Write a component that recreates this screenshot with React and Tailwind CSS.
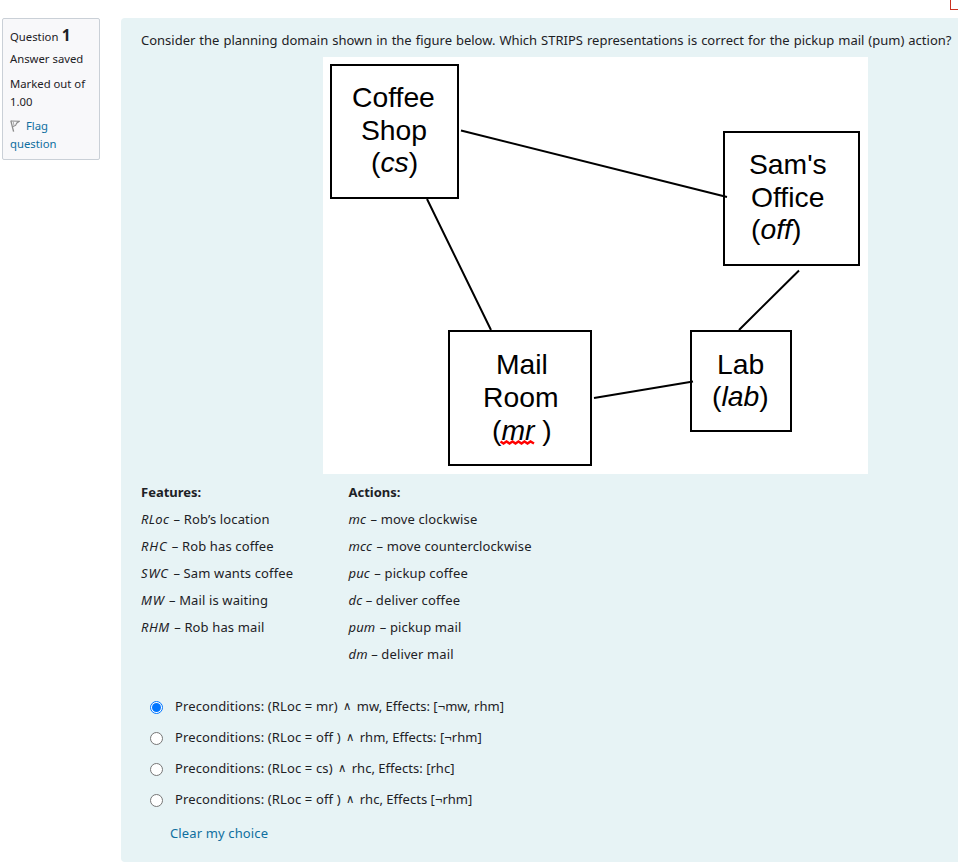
const features = [
  ['RLoc', 'Rob’s location', 'mr-[1px] tracking-[0.3px]'],
  ['RHC', 'Rob has coffee', 'mr-[1px] tracking-[0.8px]'],
  ['SWC', 'Sam wants coffee', 'mr-[1px] tracking-[0.9px]'],
  ['MW', 'Mail is waiting', 'mr-[1px] tracking-[0.7px]'],
  ['RHM', 'Rob has mail', 'mr-[1px] tracking-[0.5px]'],
];

const actions = [
  ['mc', 'move clockwise', 'mr-px'],
  ['mcc', 'move counterclockwise', 'mr-px'],
  ['puc', 'pickup coffee', 'mr-px'],
  ['dc', 'deliver coffee', ''],
  ['pum', 'pickup mail', 'mr-px'],
  ['dm', 'deliver mail', ''],
];

const options = [
  ['Preconditions: (RLoc = mr)', 'mw, Effects: [¬mw, rhm]'],
  ['Preconditions: (RLoc = off )', 'rhm, Effects: [¬rhm]'],
  ['Preconditions: (RLoc = cs)', 'rhc, Effects: [rhc]'],
  ['Preconditions: (RLoc = off )', 'rhc, Effects [¬rhm]'],
];

function TermList({ title, items }) {
  return (
    <div>
      <div className="font-bold">{title}</div>
      {items.map(([term, text, termClass]) => (
        <div key={term} className="tracking-[0.13px]">
          <i className={termClass}>{term}</i> – {text}
        </div>
      ))}
    </div>
  );
}

function FlagIcon() {
  return (
    <svg className="mr-[6px] inline-block align-[-2px]" width="10" height="12" viewBox="0 0 10 12" fill="none" stroke="#8a8a8a" strokeWidth="1.1">
      <path d="M0.8 0.6L3.6 11.6" strokeWidth="1.3" />
      <path d="M1 1L9.4 1.2L6.6 3.2L5.6 5.4L3 6.4" />
      <path d="M3.2 1.6L4 5.6" strokeWidth="0.7" />
    </svg>
  );
}

function Diagram() {
  return (
    <svg className="block bg-white" width="545" height="417" viewBox="0 0 545 417">
      <g fill="none" stroke="#000" strokeWidth="2">
        <rect x="8" y="8" width="127" height="133" />
        <rect x="401" y="75" width="135" height="133" />
        <rect x="126" y="274" width="142" height="134" />
        <rect x="368" y="274" width="100" height="100" />
        <path d="M138 73.5L404 140M104 142L168 273M271 341L370 324.5M416 273L476 213.5" />
      </g>
      <g fontSize="28.3" fill="#000" className="font-['Liberation_Sans',Arial,sans-serif]">
        <text x="29" y="50">Coffee</text>
        <text x="38" y="82.5">Shop</text>
        <text x="48" y="115">(<tspan fontStyle="italic">cs</tspan>)</text>
        <text x="426" y="116.5">Sam's</text>
        <text x="428" y="149.5">Office</text>
        <text x="428" y="182">(<tspan fontStyle="italic">off</tspan>)</text>
        <text x="173" y="316.5">Mail</text>
        <text x="160" y="349.5">Room</text>
        <text x="169" y="382.5">(<tspan fontStyle="italic">mr</tspan> )</text>
        <text x="394" y="316.5">Lab</text>
        <text x="389" y="349">(<tspan fontStyle="italic">lab</tspan>)</text>
      </g>
      <path d="M177.500 384.500l3 2l3 -2l3 2l3 -2l3 2l3 -2l3 2l3 -2l3 2l3 -2l3.500 2" fill="none" stroke="#f00" strokeWidth="2.5" />
    </svg>
  );
}

export default function App() {
  return (
    <div className="flex h-[865px] w-[958px] flex-col overflow-hidden bg-white font-['Noto_Sans','Segoe_UI',sans-serif] text-[13px] text-[#1d2125]">
      <div className="flex h-[18px] shrink-0 justify-end">
        <div className="h-[10px] w-[8px] border-b border-l border-[#ca3120]" />
      </div>
      <div className="flex items-start">
        <aside className="ml-[2px] h-[142px] w-[98px] shrink-0 rounded-[2px] border border-[#cad0d7] bg-[#f8f8fa] pl-[7px] pt-[5px] text-[11.3px] leading-[18px]">
          <div className="h-[26px] leading-[22px]">
            Question <span className="ml-[0.5px] text-[15.500px] font-bold">1</span>
          </div>
          <div className="h-[25px]">Answer saved</div>
          <div>Marked out of</div>
          <div className="h-[24px]">1.00</div>
          <div className="text-[#0f6fa0]">
            <FlagIcon />Flag
            <br />
            question
          </div>
        </aside>
        <main className="ml-[21px] h-[844px] w-[837px] shrink-0 rounded-l-[4px] bg-[#e7f3f5] pl-5 pt-[9px]">
          <p className="h-[30px] whitespace-nowrap leading-[27px] [word-spacing:0.6px]">
            Consider the planning domain shown in the figure below. Which STRIPS representations is correct for the pickup mail (pum) action?
          </p>
          <div className="pl-[182px]">
            <Diagram />
          </div>
          <div className="mt-[5px] grid grid-cols-[207.5px_1fr] whitespace-nowrap leading-[27px]">
            <TermList title="Features:" items={features} />
            <TermList title="Actions:" items={actions} />
          </div>
          <div className="mt-[23px] pl-[8.5px]">
            {options.map(([before, after], i) => (
              <label key={i} className="flex h-[31px] items-center whitespace-nowrap">
                <span
                  className={
                    i === 0
                      ? 'mt-[1px] flex size-[13px] items-center justify-center rounded-full border border-[#0075ff] bg-white'
                      : 'mt-[1px] flex size-[13px] items-center justify-center rounded-full border border-[#767676] bg-white'
                  }
                >
                  {i === 0 && <span className="size-[9px] rounded-full bg-[#0075ff]" />}
                </span>
                <span className="ml-[12.5px] tracking-[0.13px]">{before}</span>
                <span className="w-[19px] text-center font-['DejaVu_Sans',sans-serif] text-[11.5px]">∧</span>
                <span className="tracking-[0.03px]">{after}</span>
              </label>
            ))}
            <a className="ml-[20.5px] mt-[9px] inline-block tracking-[0.13px] text-[#0f6fa0]">Clear my choice</a>
          </div>
        </main>
      </div>
    </div>
  );
}
